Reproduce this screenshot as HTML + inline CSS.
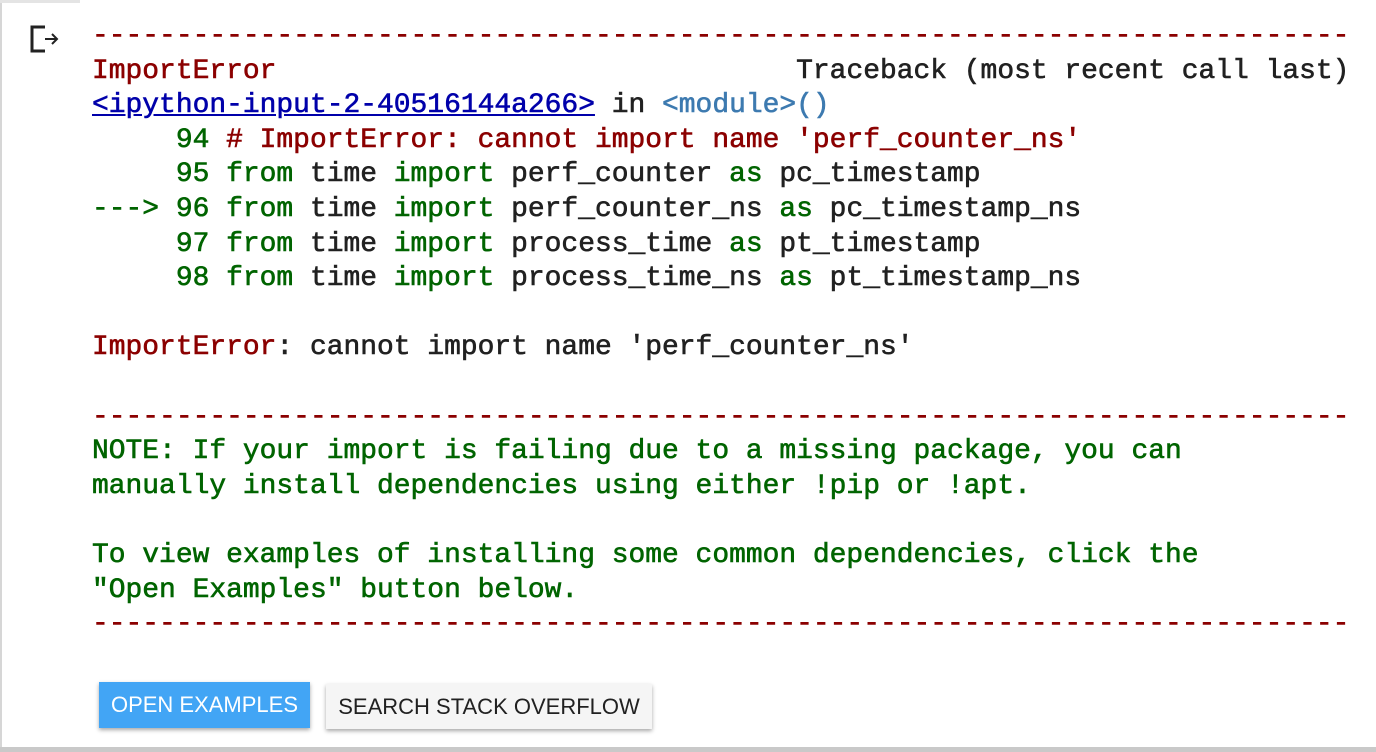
<!DOCTYPE html>
<html><head><style>
html,body{margin:0;padding:0;background:#fff;width:1376px;height:752px;overflow:hidden;position:relative}
.lb{position:absolute;left:0;top:0;width:2px;height:750px;background:#d6d6d6}
.tb{position:absolute;left:0;top:0;width:80px;height:3px;background:#e4e4e4}
.bb{position:absolute;left:0;top:747px;width:1376px;height:5px;background:#c9c9c9}
pre{position:absolute;left:92px;top:20px;margin:0;font-family:"Liberation Mono",monospace;font-size:27.95px;line-height:34.6px;color:#212121;-webkit-text-stroke:0.6px currentColor}
.r{color:#8b0000}.g{color:#006400}.a{color:#00a;text-decoration:underline}.m{color:#3d7ab0}
.btn{position:absolute;font-family:"Liberation Sans",sans-serif;font-size:22px;display:flex;align-items:center;justify-content:center;box-shadow:0 2px 4px rgba(0,0,0,.35)}
</style></head><body>
<div class="lb"></div><div class="tb"></div><div class="bb"></div>
<svg style="position:absolute;left:28px;top:24px" width="34" height="30" viewBox="0 0 34 30"><path d="M17 3H4v24h13" fill="none" stroke="#222" stroke-width="3"/><path d="M17 15h12M24 10l5 5-5 5" fill="none" stroke="#222" stroke-width="2"/></svg>
<pre><span class="r">---------------------------------------------------------------------------</span>
<span class="r">ImportError</span>                               Traceback (most recent call last)
<span class="a">&lt;ipython-input-2-40516144a266&gt;</span> in <span class="m">&lt;module&gt;()</span>
     <span class="g">94</span> <span class="r"># ImportError: cannot import name 'perf_counter_ns'</span>
     <span class="g">95</span> <span class="g">from</span> time <span class="g">import</span> perf_counter <span class="g">as</span> pc_timestamp
<span class="g">---&gt; 96</span> <span class="g">from</span> time <span class="g">import</span> perf_counter_ns <span class="g">as</span> pc_timestamp_ns
     <span class="g">97</span> <span class="g">from</span> time <span class="g">import</span> process_time <span class="g">as</span> pt_timestamp
     <span class="g">98</span> <span class="g">from</span> time <span class="g">import</span> process_time_ns <span class="g">as</span> pt_timestamp_ns

<span class="r">ImportError</span>: cannot import name 'perf_counter_ns'

<span class="r">---------------------------------------------------------------------------</span>
<span class="g">NOTE: If your import is failing due to a missing package, you can
manually install dependencies using either !pip or !apt.

To view examples of installing some common dependencies, click the
"Open Examples" button below.</span>
<span class="r">---------------------------------------------------------------------------</span></pre>
<div class="btn" style="left:99px;top:682px;width:211px;height:46px;background:#42a5f5;color:#fff">OPEN EXAMPLES</div>
<div class="btn" style="left:326px;top:684px;width:326px;height:45px;background:#f5f5f5;color:#212121">SEARCH STACK OVERFLOW</div>
</body></html>
